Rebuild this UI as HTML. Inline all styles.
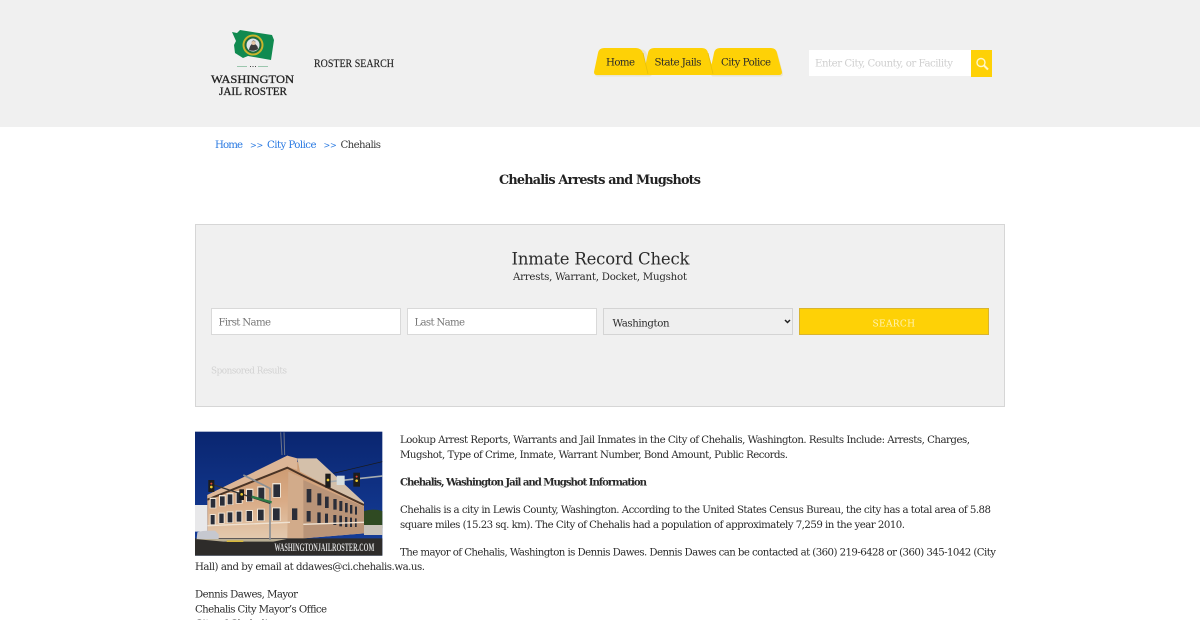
<!DOCTYPE html>
<html lang="en"><head><meta charset="utf-8"><title>Chehalis Arrests and Mugshots</title>
<style>
html,body{margin:0;padding:0;width:1200px;height:620px;overflow:hidden;background:#fff}
svg{display:block;position:absolute;left:0;top:0}
text{font-family:"DejaVu Serif","Liberation Serif",serif;font-size:10.2px;fill:#2a2a2a;white-space:pre}
</style></head><body>
<svg width="1200" height="620" viewBox="0 0 1200 620" xmlns="http://www.w3.org/2000/svg">
<defs>
<linearGradient id="sky" x1="0" y1="0" x2="0" y2="1"><stop offset="0" stop-color="#0a2670"/><stop offset="1" stop-color="#163f9c"/></linearGradient>
<linearGradient id="wall" x1="0" y1="0" x2="0" y2="1"><stop offset="0" stop-color="#c9966c"/><stop offset=".55" stop-color="#d9ab86"/><stop offset="1" stop-color="#e3c9ae"/></linearGradient>
</defs>
<rect width="1200" height="127" fill="#f0f0f0"/>
<!-- logo -->
<path d="M232 32 L237 33 L240 30 L272 35 L274 40 L271 60 L248 56 L243 58 L235 53 L234 45 L236 41Z" fill="#108a50"/>
<circle cx="253" cy="45" r="10.500" fill="#c9b52c"/><circle cx="253" cy="45" r="8.500" fill="#1f6b3d"/><circle cx="253" cy="45" r="6.500" fill="#dfe6ea"/>
<path d="M249 50 Q250 45 252 44 Q251 41 253.500 40.500 Q256.500 41 255 44 Q258 46 258 49 Q254 52 249 50Z" fill="#3c3c3c"/>
<circle cx="253.500" cy="43" r="2" fill="#e3c6a8"/>
<path d="M237 66.500H247M258 66.500H268" stroke="#7fb897" stroke-width=".7"/><path d="M250 66.500H256" stroke="#444" stroke-width="1" stroke-dasharray="1 1.500"/>
<text x="211" y="83" textLength="83" lengthAdjust="spacingAndGlyphs" style="font-family:'Liberation Serif',serif;font-size:12px;fill:#222;stroke:#222;stroke-width:.3">WASHINGTON</text>
<text x="219" y="95" textLength="68" lengthAdjust="spacingAndGlyphs" style="font-family:'Liberation Serif',serif;font-size:12px;fill:#222;stroke:#222;stroke-width:.3">JAIL ROSTER</text>
<text x="314" y="67" textLength="80" lengthAdjust="spacingAndGlyphs" style="font-family:'Liberation Serif',serif;font-size:11.500px;fill:#222;stroke:#222;stroke-width:.15">ROSTER SEARCH</text>
<!-- nav tabs -->
<g fill="#e6dfc4" opacity=".7" transform="translate(1,1.500)">
<path d="M594 72 L598 53 Q599 48 604 48H640Q645 48 646 53L651 72Q651 75 648 75H597Q594 75 594 72Z"/>
<path d="M710 72 L714 53 Q715 48 720 48H771Q776 48 777 53L782 72Q782 75 779 75H712Q710 75 710 72Z"/>
</g>
<path fill="#fed106" d="M594 72 L598 53 Q599 48 604 48H636Q641 48 643 53L648 72Q648 75 645 75H597Q594 75 594 72Z"/>
<path fill="#fed106" d="M644 75 L644 72 L648 53 Q649 48 654 48H702Q707 48 708 53L714 72Q714 75 711 75Z"/>
<path fill="#fed106" d="M710 72 L714 53 Q715 48 720 48H771Q776 48 777 53L782 72Q782 75 779 75H712Q710 75 710 72Z"/>
<path d="M643 53L648 74M708 53L713 74" stroke="#e8c008" stroke-width=".8" fill="none"/>
<text x="606" y="65.500" textLength="29">Home</text>
<text x="654.500" y="65.500" textLength="47">State Jails</text>
<text x="721" y="65.500" textLength="50">City Police</text>
<!-- header search -->
<rect x="809" y="50" width="162" height="26" fill="#fff"/>
<rect x="971" y="50" width="21" height="27" fill="#fed106"/>
<text x="815" y="66.500" textLength="138" style="fill:#cfcfcf">Enter City, County, or Facility</text>
<circle cx="981" cy="62.500" r="4" fill="none" stroke="#fff6c8" stroke-width="1.400"/>
<path d="M984 65.500L988 69.500" stroke="#fff6c8" stroke-width="2"/>
<!-- breadcrumb -->
<text x="215" y="148" textLength="28" style="fill:#2a7ae2">Home</text>
<text x="250" y="148" style="fill:#2a7ae2;font-size:8px;letter-spacing:-.2px">&gt;&gt;</text>
<text x="267" y="148" textLength="49.500" style="fill:#2a7ae2">City Police</text>
<text x="323.500" y="148" style="fill:#2a7ae2;font-size:8px;letter-spacing:-.2px">&gt;&gt;</text>
<text x="340.500" y="148" textLength="40.500" style="fill:#3a3a3a">Chehalis</text>
<text x="499" y="184" textLength="202" style="font-size:12.800px;font-weight:bold;fill:#222">Chehalis Arrests and Mugshots</text>
<!-- panel -->
<rect x="195.500" y="224.500" width="809" height="182" fill="#f0f0f0" stroke="#d6d6d6"/>
<text x="511.500" y="264.500" textLength="178" style="font-size:16.500px;fill:#2a2a2a">Inmate Record Check</text>
<text x="513" y="280" textLength="174">Arrests, Warrant, Docket, Mugshot</text>
<rect x="211.500" y="308.500" width="189" height="26" fill="#fff" stroke="#d9d9d9"/>
<rect x="407.500" y="308.500" width="189" height="26" fill="#fff" stroke="#d9d9d9"/>
<rect x="603.500" y="308.500" width="189" height="26" fill="#efefef" stroke="#d4d4d4"/>
<rect x="799.500" y="308.500" width="189" height="26" fill="#fed106" stroke="#d8b430"/>
<text x="218.500" y="325.500" textLength="52.500" style="fill:#777">First Name</text>
<text x="414.500" y="325.500" textLength="50.500" style="fill:#777">Last Name</text>
<text x="612.500" y="326.500" textLength="57">Washington</text>
<path d="M785 320L787.500 322.500L790 320" stroke="#222" stroke-width="1.500" fill="none"/>
<text x="872.500" y="326.500" textLength="42.500" style="fill:#fff3b5;font-size:9px">SEARCH</text>
<text x="211" y="373.500" textLength="76" style="font-size:8.800px;fill:#d2d2d2">Sponsored Results</text>
<!-- photo -->
<g transform="translate(190,425) scale(.33333)">
<rect x="15" y="20" width="562" height="372" fill="url(#sky)"/>
<path d="M272 22L276 90M282 22L284 90" stroke="#6d7488" stroke-width="3"/>
<path d="M430 145L577 110" stroke="#1a1a1a" stroke-width="2"/>
<path d="M15 240H52V320H15Z" fill="#e8e8ea"/>
<path d="M522 258Q550 250 577 258V310H522Z" fill="#2f4a22"/>
<path d="M522 300H577V330H522Z" fill="#c8c2b8"/>
<path d="M52 210L292 92L522 235V325L340 340H52Z" fill="url(#wall)"/>
<path d="M52 210L292 92L322 100V135L292 125L52 225Z" fill="#dcb697"/>
<path d="M322 100L380 100L522 232V240L330 140Z" fill="#d4c0aa"/>
<path d="M52 224L292 128L335 150L522 240" fill="none" stroke="#4a3426" stroke-width="6"/>
<path d="M295 140L340 160V340H292Z" fill="#d2ab8a"/>
<path d="M340 165L522 245V325L340 340Z" fill="#b99478"/>
<g fill="#f0e4d4">
<path d="M59 218h20v32h-20zM87 210h20v34h-20zM110 204h20v36h-20zM137 198h21v38h-21zM168 191h22v40h-22zM202 184h24v42h-24zM247 174h26v44h-26zM59 267h18v33h-18zM85 263h19v33h-19zM110 259h20v35h-20zM137 257h20v35h-20zM167 255h22v35h-22zM201 251h23v37h-23zM246 247h26v41h-26z"/>
</g>
<g fill="#2a2d38">
<path d="M62 222h14v26h-14zM90 214h14v28h-14zM113 208h14v30h-14zM140 202h15v32h-15zM171 195h16v34h-16zM205 188h18v36h-18zM250 178h20v38h-20zM62 270h12v28h-12zM88 266h13v28h-13zM113 262h14v30h-14zM140 260h14v30h-14zM170 258h16v30h-16zM204 254h17v32h-17zM249 250h20v36h-20zM306 250h16v35h-16z"/>
<path d="M350 192h14v40h-14zM382 205h12v36h-12zM405 215h11v34h-11zM430 222h10v32h-10zM448 228h9v30h-9zM465 234h8v28h-8zM480 240h7v26h-7zM495 245h6v24h-6zM350 258h12v32h-12zM382 262h10v32h-10zM405 266h9v30h-9zM430 270h9v30h-9zM448 272h8v32h-8zM465 276h7v30h-7zM480 278h6v28h-6zM495 280h5v26h-5z"/>
</g>
<path d="M52 302L300 292M340 298L522 292" stroke="#efe2d2" stroke-width="4"/>
<path d="M15 340H577V392H15Z" fill="#2e2c2a"/>
<path d="M15 342H290L250 350H100Z" fill="#b9ae94"/>
<path d="M110 346H160V351H110Z" fill="#d6b83c"/>
<path d="M22 322Q35 316 75 317L86 328V342H20Z" fill="#c6c8cf"/>
<path d="M160 150L240 190V345" stroke="#8a8f94" stroke-width="5" fill="none"/>
<path d="M72 180L240 235" stroke="#333" stroke-width="4"/>
<path d="M185 215L245 232" stroke="#2c7a45" stroke-width="7"/>
<path d="M420 170L577 153" stroke="#a6acb0" stroke-width="5"/>
<rect x="55" y="165" width="18" height="36" fill="#1d1d1d"/><circle cx="64" cy="176" r="3" fill="#d43"/><circle cx="64" cy="186" r="4" fill="#ec3"/>
<rect x="148" y="193" width="14" height="32" fill="#1d1d1d"/><circle cx="155" cy="208" r="4" fill="#ec3"/>
<rect x="406" y="146" width="16" height="42" fill="#1d1d1d"/><circle cx="414" cy="165" r="4" fill="#ec3"/>
<rect x="440" y="152" width="24" height="28" fill="#d7dfe0"/>
<rect x="490" y="143" width="20" height="42" fill="#1d1d1d"/><circle cx="500" cy="155" r="3" fill="#d43"/><circle cx="500" cy="167" r="4" fill="#ec3"/>
<text x="253" y="378" textLength="300" lengthAdjust="spacingAndGlyphs" style="font-family:'Liberation Serif',serif;font-size:36px;font-weight:bold;fill:#d9d9d9">WASHINGTONJAILROSTER.COM</text>
</g>
<!-- body text -->
<text x="400" y="443" textLength="570">Lookup Arrest Reports, Warrants and Jail Inmates in the City of Chehalis, Washington. Results Include: Arrests, Charges,</text>
<text x="400" y="458" textLength="388">Mugshot, Type of Crime, Inmate, Warrant Number, Bond Amount, Public Records.</text>
<text x="400" y="485.500" textLength="247" style="font-weight:bold">Chehalis, Washington Jail and Mugshot Information</text>
<text x="400" y="513" textLength="591">Chehalis is a city in Lewis County, Washington. According to the United States Census Bureau, the city has a total area of 5.88</text>
<text x="400" y="528" textLength="505">square miles (15.23 sq. km). The City of Chehalis had a population of approximately 7,259 in the year 2010.</text>
<text x="400" y="555.500" textLength="596">The mayor of Chehalis, Washington is Dennis Dawes. Dennis Dawes can be contacted at (360) 219-6428 or (360) 345-1042 (City</text>
<text x="195" y="570" textLength="230">Hall) and by email at ddawes@ci.chehalis.wa.us.</text>
<text x="195" y="597.500" textLength="103">Dennis Dawes, Mayor</text>
<text x="195" y="612.500" textLength="132">Chehalis City Mayor’s Office</text>
<text x="195" y="627" textLength="78">City of Chehalis</text>
</svg>
</body></html>
